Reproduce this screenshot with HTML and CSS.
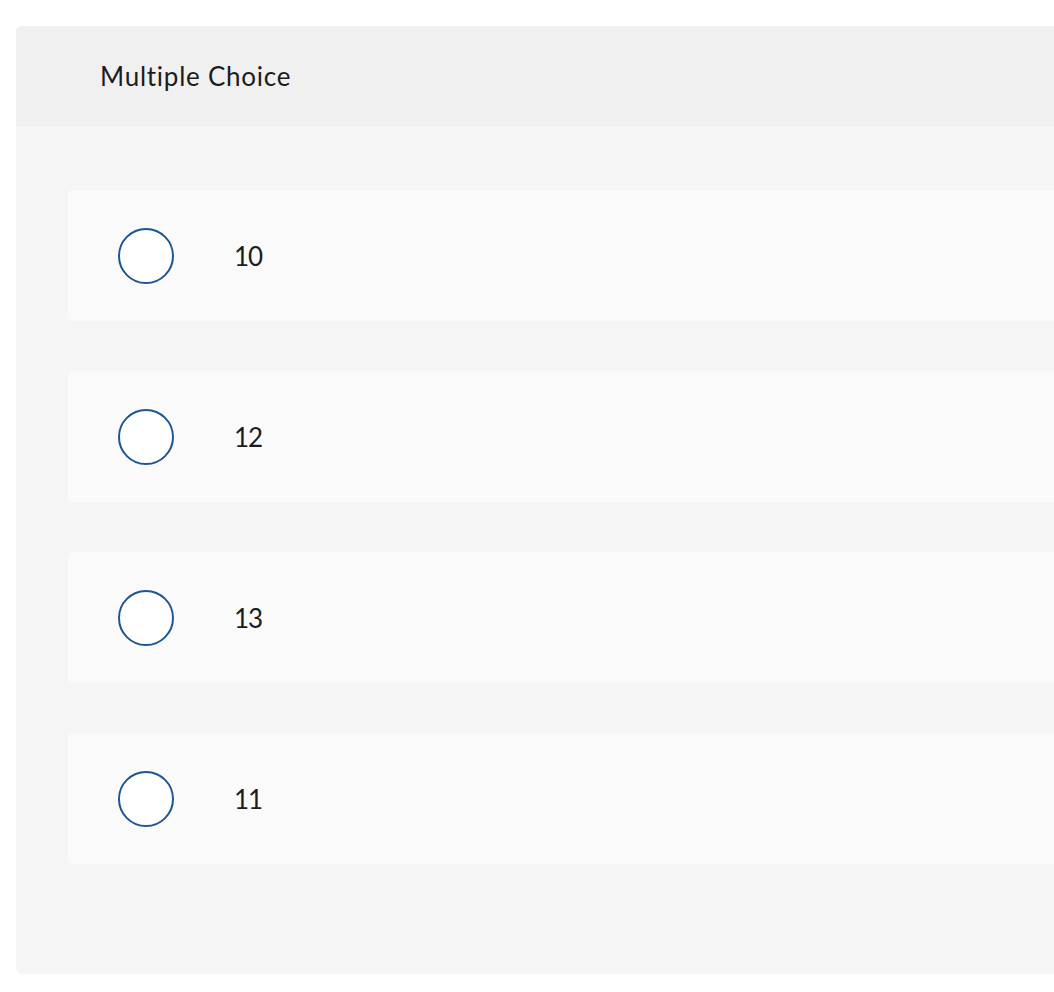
FILE: index.html
```html
<!DOCTYPE html>
<html>
<head>
<meta charset="utf-8">
<link rel="stylesheet" href="styles.css">
</head>
<body>
<div class="panel">
  <div class="panel-header">Multiple Choice</div>
  <div class="panel-body">
    <label class="option"><span class="radio"></span><span class="option-text">10</span></label>
    <label class="option"><span class="radio"></span><span class="option-text">12</span></label>
    <label class="option"><span class="radio"></span><span class="option-text">13</span></label>
    <label class="option"><span class="radio"></span><span class="option-text">11</span></label>
  </div>
</div>
</body>
</html>
```
FILE: styles.css
```css
html, body {
  margin: 0;
  padding: 0;
  background: #ffffff;
  overflow: hidden;
}
body {
  font-family: Lato, "Open Sans", sans-serif;
  color: #1c1c1c;
  padding: 26px 0 0 16px;
}
.panel {
  border-radius: 6px 0 0 6px;
  overflow: hidden;
  background: #f5f5f5;
}
.panel-header {
  height: 100px;
  background: #f0f0f0;
  display: flex;
  align-items: center;
  padding-left: 84px;
  font-size: 26px;
  letter-spacing: 0.75px;
}
.panel-body {
  display: flex;
  flex-direction: column;
  gap: 50px;
  padding: 64px 0 110px 52px;
}
.option {
  height: 131px;
  background: #fafafa;
  border-radius: 5px 0 0 5px;
  display: flex;
  align-items: center;
  padding-left: 50px;
  gap: 60px;
}
.radio {
  width: 52px;
  height: 52px;
  border: 2px solid #1d5690;
  border-radius: 50%;
  background: #ffffff;
  flex: none;
}
.option-text {
  font-size: 26px;
  letter-spacing: -1px;
}
```
